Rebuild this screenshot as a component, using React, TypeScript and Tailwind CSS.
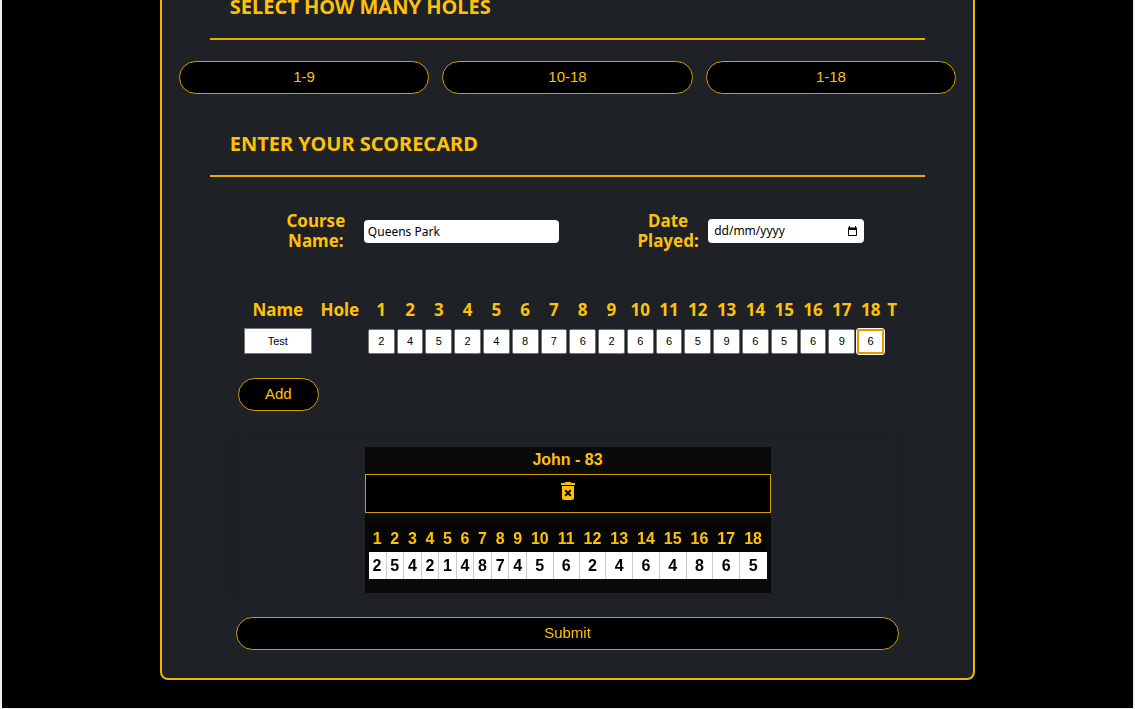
import { useState, type ReactNode } from 'react';
import { MdDeleteForever } from 'react-icons/md';

const holes = Array.from({ length: 18 }, (_, i) => i + 1);
const testScores = [2, 4, 5, 2, 4, 8, 7, 6, 2, 6, 6, 5, 9, 6, 5, 6, 9, 6];
const johnScores = [2, 5, 4, 2, 1, 4, 8, 7, 4, 5, 6, 2, 4, 6, 4, 8, 6, 5];

const pill =
  'block h-[33px] rounded-full border border-[#d39e00] bg-black pb-px text-[15px] leading-5 font-normal text-[#ffc107] font-["Liberation_Sans",Arial,sans-serif]';

function SectionTitle({ children }: { children: ReactNode }) {
  return (
    <div className="mx-12 border-b-2 border-[#e5ac06] pb-6 pl-5">
      <h2 className="text-xl leading-[14px] font-bold">{children}</h2>
    </div>
  );
}

export default function App() {
  const [scores, setScores] = useState(testScores.map(String));
  return (
    <div className="overflow-hidden border-x-2 border-b border-[#f0f0f0] bg-black pb-7 font-['Noto_Sans',sans-serif] text-[#ffc107]">
      <main className="mx-auto w-[calc(72%+1px)] rounded-b-lg border-2 border-t-0 border-[#efb506] bg-[#1e2126] pb-7">
        <SectionTitle>SELECT HOW MANY HOLES</SectionTitle>
        <div className="mt-[21px] grid grid-cols-3 gap-[13px] px-[17px]">
          <button className={pill}>1-9</button>
          <button className={pill}>10-18</button>
          <button className={pill}>1-18</button>
        </div>

        <form className="mt-[43px]" onSubmit={(e) => e.preventDefault()}>
          <SectionTitle>ENTER YOUR SCORECARD</SectionTitle>
          <div className="mx-[74px]">
            <div className="mt-[34px] flex items-center pr-[35px] pl-12 text-[17px] leading-5 font-bold">
              <label htmlFor="course" className="w-16 text-center">
                Course Name:
              </label>
              <input
                id="course"
                defaultValue="Queens Park"
                className="ml-4 h-[23px] w-[195px] rounded-[4px] bg-white px-1 text-xs font-normal text-black"
              />
              <label htmlFor="date" className="ml-auto w-16 text-center">
                Date Played:
              </label>
              <div className="ml-2 flex h-6 w-[156px] items-center rounded-[4px] bg-white px-1.5 text-black">
                <input
                  id="date"
                  placeholder="dd/mm/yyyy"
                  className="w-full min-w-0 text-xs font-normal placeholder:text-black"
                />
                <button type="button" aria-label="Open calendar" className="shrink-0">
                  <svg viewBox="0 0 11 11" className="size-[11px]" fill="none" stroke="currentColor">
                    <path d="M1.5 3.5h8v6h-8z" />
                    <path d="M1 2.5h9" strokeWidth="2" />
                    <path d="M2.5 0v2M8.5 0v2" />
                  </svg>
                </button>
              </div>
            </div>

            <table className="mt-[49px] ml-[7px] w-[calc(100%-7px)] table-fixed text-center">
              <colgroup>
                <col className="w-[70px]" />
                <col className="w-[54px]" />
                {holes.map((h) => (
                  <col key={h} />
                ))}
                <col className="w-[14px]" />
              </colgroup>
              <thead className="text-[17px] leading-5 font-bold">
                <tr>
                  <th>Name</th>
                  <th>Hole</th>
                  {holes.map((h) => (
                    <th key={h}>{h}</th>
                  ))}
                  <th>T</th>
                </tr>
              </thead>
              <tbody className="font-['Liberation_Sans',Arial,sans-serif] text-[11px] text-black">
                <tr>
                  <td className="px-px pt-2">
                    <input
                      aria-label="Player name"
                      defaultValue="Test"
                      className="block h-[26px] w-full border border-[#767676] bg-white text-center"
                    />
                  </td>
                  <td />
                  {holes.map((h, i) => (
                    <td key={h} className="px-px pt-2">
                      <input
                        aria-label={`Hole ${h}`}
                        autoFocus={h === 18}
                        value={scores[i]}
                        onChange={(e) => setScores(scores.map((s, j) => (j === i ? e.target.value : s)))}
                        className="block h-[25px] w-full rounded-[2px] border border-[#767676] bg-white text-center focus:border-2 focus:border-[#e59700] focus:outline-1 focus:outline-offset-0 focus:outline-white"
                      />
                    </td>
                  ))}
                  <td />
                </tr>
              </tbody>
            </table>

            <button type="button" className={`${pill} mt-6 ml-0.5 w-[81px]`}>
              Add
            </button>

            <section className="mt-[27px] flex justify-center pt-[9px] font-['Liberation_Sans',Arial,sans-serif] font-bold shadow-[0_0_10px_rgba(0,0,0,0.1)]">
              <div className="w-[406px] bg-[#0a0a0a] pb-3.5">
                <h3 className="pb-px text-center text-base leading-[26px]">John - 83</h3>
                <button
                  type="button"
                  aria-label="Delete John"
                  className="flex h-[39px] w-full justify-center border border-[#d39e00] bg-black pt-1"
                >
                  <MdDeleteForever className="size-6" />
                </button>
                <div className="px-1 pt-3">
                  <table className="w-full text-center text-base leading-[27px]">
                    <thead className="bg-[#050505]">
                      <tr>
                        {holes.map((h) => (
                          <th key={h} className="px-1">
                            {h}
                          </th>
                        ))}
                      </tr>
                    </thead>
                    <tbody className="bg-white text-black">
                      <tr>
                        {johnScores.map((s, i) => (
                          <td key={i} className="border-r border-[#cccccc] last:border-r-0">
                            {s}
                          </td>
                        ))}
                      </tr>
                    </tbody>
                  </table>
                </div>
              </div>
            </section>

            <button type="submit" className={`${pill} mt-6 w-full`}>
              Submit
            </button>
          </div>
        </form>
      </main>
    </div>
  );
}
